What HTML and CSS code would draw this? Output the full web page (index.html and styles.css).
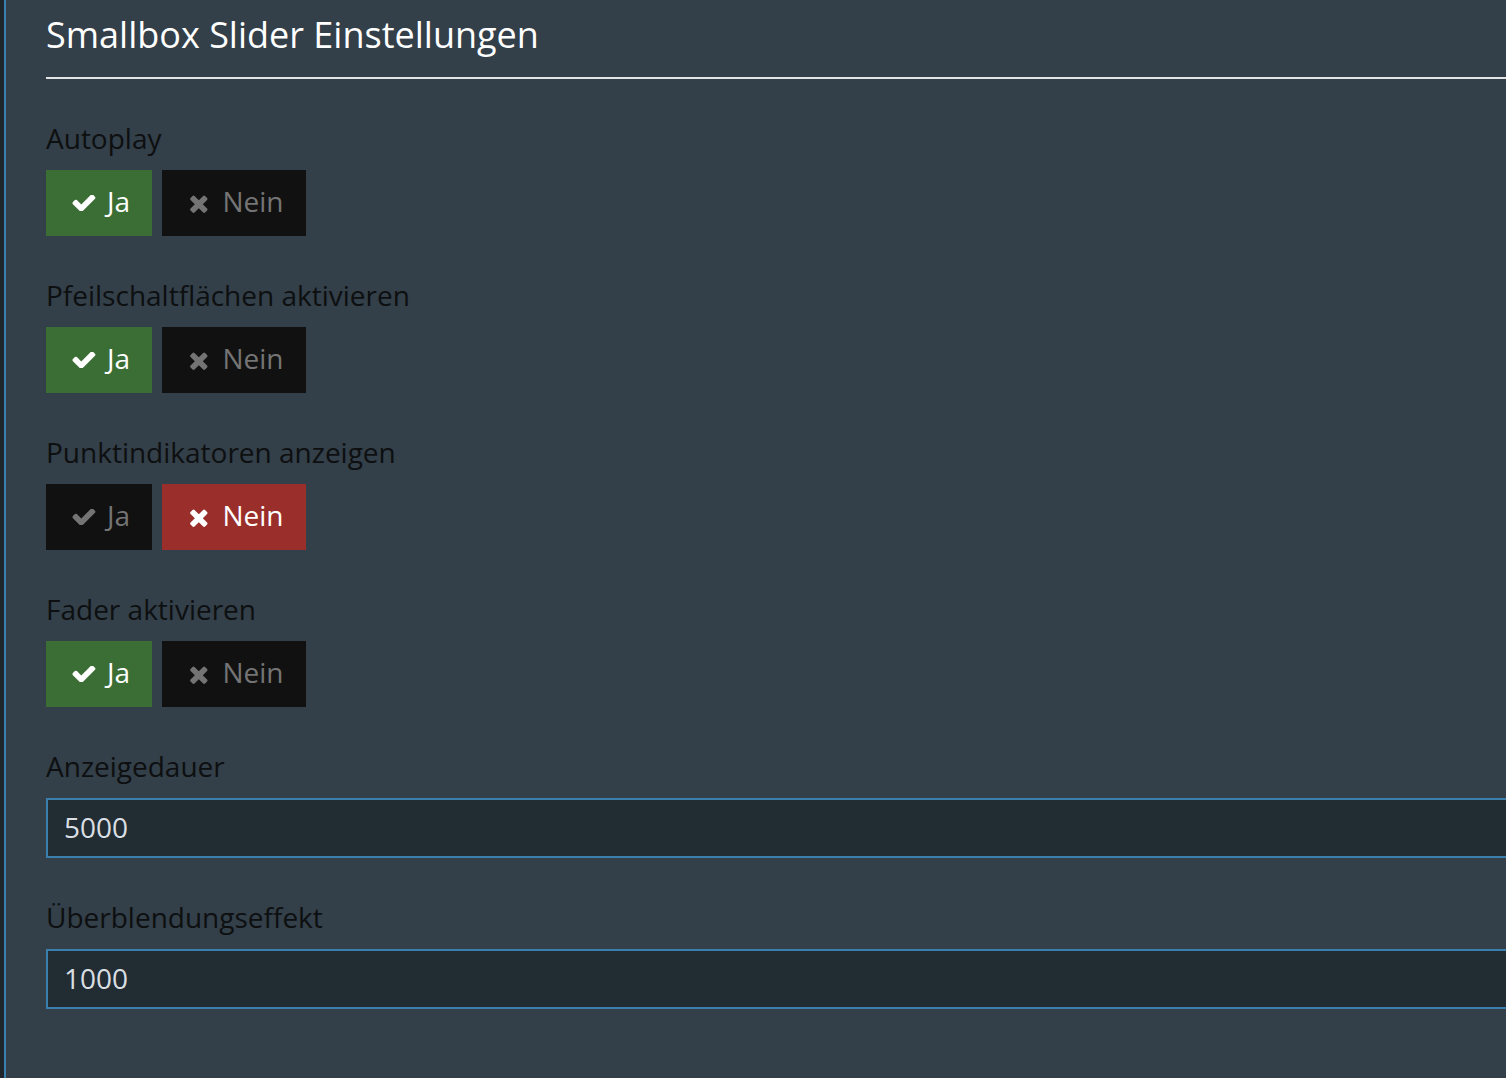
FILE: index.html
```html
<!DOCTYPE html>
<html lang="de">
<head>
<meta charset="utf-8">
<title>Smallbox Slider Einstellungen</title>
<link rel="stylesheet" href="styles.css">
</head>
<body>
<div class="frame">
  <div class="edge"></div>
  <div class="panel">
    <h1 class="title">Smallbox Slider Einstellungen</h1>
    <div class="rule"></div>
    <div class="form">
      <div class="field">
        <div class="label">Autoplay</div>
        <div class="toggle">
          <span class="btn btn-yes active"><svg class="ico" viewBox="100 380 1600 1080"><path d="M1671 566q0 40-28 68l-724 724-136 136q-28 28-68 28t-68-28l-136-136-362-362q-28-28-28-68t28-68l136-136q28-28 68-28t68 28l294 295 656-657q28-28 68-28t68 28l136 136q28 28 28 68z"/></svg>Ja</span>
          <span class="btn btn-no"><svg class="ico ico-x" viewBox="180 260 1320 1300"><path d="M1490 1322q0 40-28 68l-136 136q-28 28-68 28t-68-28l-294-294-294 294q-28 28-68 28t-68-28l-136-136q-28-28-28-68t28-68l294-294-294-294q-28-28-28-68t28-68l136-136q28-28 68-28t68 28l294 294 294-294q28-28 68-28t68 28l136 136q28 28 28 68t-28 68l-294 294 294 294q28 28 28 68z"/></svg>Nein</span>
        </div>
      </div>
      <div class="field">
        <div class="label">Pfeilschaltflächen aktivieren</div>
        <div class="toggle">
          <span class="btn btn-yes active"><svg class="ico" viewBox="100 380 1600 1080"><path d="M1671 566q0 40-28 68l-724 724-136 136q-28 28-68 28t-68-28l-136-136-362-362q-28-28-28-68t28-68l136-136q28-28 68-28t68 28l294 295 656-657q28-28 68-28t68 28l136 136q28 28 28 68z"/></svg>Ja</span>
          <span class="btn btn-no"><svg class="ico ico-x" viewBox="180 260 1320 1300"><path d="M1490 1322q0 40-28 68l-136 136q-28 28-68 28t-68-28l-294-294-294 294q-28 28-68 28t-68-28l-136-136q-28-28-28-68t28-68l294-294-294-294q-28-28-28-68t28-68l136-136q28-28 68-28t68 28l294 294 294-294q28-28 68-28t68 28l136 136q28 28 28 68t-28 68l-294 294 294 294q28 28 28 68z"/></svg>Nein</span>
        </div>
      </div>
      <div class="field">
        <div class="label">Punktindikatoren anzeigen</div>
        <div class="toggle">
          <span class="btn btn-yes"><svg class="ico" viewBox="100 380 1600 1080"><path d="M1671 566q0 40-28 68l-724 724-136 136q-28 28-68 28t-68-28l-136-136-362-362q-28-28-28-68t28-68l136-136q28-28 68-28t68 28l294 295 656-657q28-28 68-28t68 28l136 136q28 28 28 68z"/></svg>Ja</span>
          <span class="btn btn-no active"><svg class="ico ico-x" viewBox="180 260 1320 1300"><path d="M1490 1322q0 40-28 68l-136 136q-28 28-68 28t-68-28l-294-294-294 294q-28 28-68 28t-68-28l-136-136q-28-28-28-68t28-68l294-294-294-294q-28-28-28-68t28-68l136-136q28-28 68-28t68 28l294 294 294-294q28-28 68-28t68 28l136 136q28 28 28 68t-28 68l-294 294 294 294q28 28 28 68z"/></svg>Nein</span>
        </div>
      </div>
      <div class="field">
        <div class="label">Fader aktivieren</div>
        <div class="toggle">
          <span class="btn btn-yes active"><svg class="ico" viewBox="100 380 1600 1080"><path d="M1671 566q0 40-28 68l-724 724-136 136q-28 28-68 28t-68-28l-136-136-362-362q-28-28-28-68t28-68l136-136q28-28 68-28t68 28l294 295 656-657q28-28 68-28t68 28l136 136q28 28 28 68z"/></svg>Ja</span>
          <span class="btn btn-no"><svg class="ico ico-x" viewBox="180 260 1320 1300"><path d="M1490 1322q0 40-28 68l-136 136q-28 28-68 28t-68-28l-294-294-294 294q-28 28-68 28t-68-28l-136-136q-28-28-28-68t28-68l294-294-294-294q-28-28-28-68t28-68l136-136q28-28 68-28t68 28l294 294 294-294q28-28 68-28t68 28l136 136q28 28 28 68t-28 68l-294 294 294 294q28 28 28 68z"/></svg>Nein</span>
        </div>
      </div>
      <div class="field">
        <div class="label">Anzeigedauer</div>
        <div class="input">5000</div>
      </div>
      <div class="field">
        <div class="label">Überblendungseffekt</div>
        <div class="input">1000</div>
      </div>
    </div>
  </div>
</div>
</body>
</html>
```

FILE: styles.css
```css
html, body {
  margin: 0;
  padding: 0;
  height: 100%;
  overflow: hidden;
  background: #333f49;
}
body {
  font-family: "Open Sans", "DejaVu Sans", sans-serif;
}
.frame {
  display: flex;
  min-height: 100%;
}
.edge {
  width: 4px;
  flex: none;
  background: #1e262b;
  border-right: 2px solid #3a80b0;
}
.panel {
  flex: 1;
  min-width: 0;
  padding: 10px 0 0 40px;
  background: #333f49;
  overflow: hidden;
}
.title {
  margin: 0;
  font-size: 36px;
  line-height: 50px;
  font-weight: 400;
  color: #ffffff;
}
.rule {
  height: 2px;
  margin-top: 17px;
  background: #e2e4e6;
}
.form {
  padding-top: 39px;
  margin-right: -60px;
}
.field {
  margin-bottom: 39px;
}
.label {
  font-size: 28px;
  line-height: 40px;
  color: #0d0f10;
  margin-bottom: 12px;
}
.toggle {
  display: flex;
  gap: 10px;
}
.btn {
  display: flex;
  align-items: center;
  justify-content: center;
  height: 66px;
  padding: 0 22px 4px 26px;
  font-size: 28px;
  color: #747474;
  background: #111111;
  box-sizing: border-box;
}
.btn-yes {
  width: 106px;
}
.btn-no {
  width: 144px;
}
.btn.btn-yes.active {
  background: #3b6e35;
  color: #ffffff;
}
.btn.btn-no.active {
  background: #9a2e2b;
  color: #ffffff;
}
.ico {
  width: 24px;
  height: 16px;
  fill: currentColor;
  margin-right: 11px;
  margin-top: 4px;
  flex: none;
}
.ico-x {
  width: 20px;
  height: 19px;
  margin-right: 14px;
}
.input {
  height: 60px;
  box-sizing: border-box;
  border: 2px solid #3a7fad;
  background: #222c33;
  color: #d9dfe3;
  font-size: 28px;
  line-height: 54px;
  padding-left: 16px;
}
```
